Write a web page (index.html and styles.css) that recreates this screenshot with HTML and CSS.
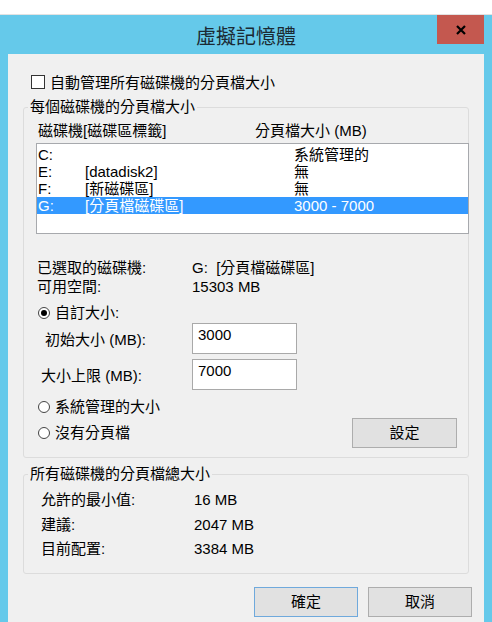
FILE: index.html
```html
<!DOCTYPE html>
<html lang="zh-Hant">
<head>
<meta charset="utf-8">
<title>虛擬記憶體</title>
<link rel="stylesheet" href="styles.css">
</head>
<body>
<div class="topgap"></div>
<div class="window">
  <div class="titlebar">
    <div class="title">虛擬記憶體</div>
    <div class="close">
      <svg width="10" height="10" viewBox="0 0 10 10"><path d="M1 1 L9 9 M9 1 L1 9" stroke="#000" stroke-width="2.2" fill="none"/></svg>
    </div>
  </div>
  <div class="client">
    <div class="check-row"><span class="checkbox"></span><span>自動管理所有磁碟機的分頁檔大小</span></div>

    <fieldset class="group g1">
      <legend>每個磁碟機的分頁檔大小</legend>
      <div class="list-head"><span class="h1">磁碟機[磁碟區標籤]</span><span>分頁檔大小 (MB)</span></div>
      <div class="listbox">
        <div class="row"><span class="c1">C:</span><span class="c2"></span><span class="c3">系統管理的</span></div>
        <div class="row"><span class="c1">E:</span><span class="c2">[datadisk2]</span><span class="c3">無</span></div>
        <div class="row"><span class="c1">F:</span><span class="c2">[新磁碟區]</span><span class="c3">無</span></div>
        <div class="row selected"><span class="c1">G:</span><span class="c2">[分頁檔磁碟區]</span><span class="c3">3000 - 7000</span></div>
      </div>
      <div class="info">
        <div class="kv"><span class="k">已選取的磁碟機:</span><span>G:&nbsp; [分頁檔磁碟區]</span></div>
        <div class="kv"><span class="k">可用空間:</span><span>15303 MB</span></div>
      </div>
      <div class="radio-row first"><span class="radio checked"></span><span>自訂大小:</span></div>
      <div class="field-row r1"><span class="flabel">初始大小 (MB):</span><div class="input">3000</div></div>
      <div class="field-row r2"><span class="flabel">大小上限 (MB):</span><div class="input">7000</div></div>
      <div class="radio-row second"><span class="radio"></span><span>系統管理的大小</span></div>
      <div class="last-row">
        <div class="radio-inline"><span class="radio"></span><span>沒有分頁檔</span></div>
        <div class="btn set">設定</div>
      </div>
    </fieldset>

    <fieldset class="group g2">
      <legend>所有磁碟機的分頁檔總大小</legend>
      <div class="totals">
        <div class="trow"><span class="tk">允許的最小值:</span><span>16 MB</span></div>
        <div class="trow"><span class="tk">建議:</span><span>2047 MB</span></div>
        <div class="trow"><span class="tk">目前配置:</span><span>3384 MB</span></div>
      </div>
    </fieldset>

    <div class="buttons">
      <div class="btn default">確定</div>
      <div class="btn">取消</div>
    </div>
  </div>
</div>
</body>
</html>
```

FILE: styles.css
```css
* { box-sizing: border-box; }
html, body {
  margin: 0;
  padding: 0;
  background: #ffffff;
  overflow: hidden;
}
body {
  font-family: "Liberation Sans", "Noto Sans CJK TC", sans-serif;
  font-size: 15px;
  color: #000;
  width: 492px;
  height: 622px;
}
.topgap {
  height: 15px;
  border-bottom: 1px solid #e2e2e2;
}
.window {
  background: #65c9ea;
  padding: 0 8px;
  height: 607px;
}
.titlebar {
  height: 39px;
  display: grid;
  grid-template-columns: 47px 1fr 47px;
  align-items: start;
}
.title {
  grid-column: 2;
  text-align: center;
  font-size: 20px;
  line-height: 26px;
  padding-top: 8px;
  color: #1b2a33;
  font-family: "Noto Sans CJK TC", sans-serif;
}
.close {
  grid-column: 3;
  height: 29px;
  background: #c4584f;
  display: flex;
  align-items: center;
  justify-content: center;
}
.close svg { display: block; }

.client {
  background: #f0f0f0;
  height: 568px;
  padding: 19px 12px 0 15px;
  display: flex;
  flex-direction: column;
}
.check-row {
  height: 20px;
  display: flex;
  align-items: center;
  gap: 5px;
  padding-left: 8px;
  line-height: 18px;
}
.checkbox {
  width: 14px;
  height: 14px;
  border: 1px solid #333;
  background: #fff;
  margin-top: -2px;
}

.group {
  margin: 0 3px 0 0;
  padding: 0;
  border: 1px solid #dcdcdc;
  border-radius: 3px;
  min-width: 0;
}
.group legend {
  margin-left: 4px;
  padding: 0 2px;
  line-height: 18px;
  font-size: 15px;
}
.g1 { margin-top: 5px; padding-bottom: 9px; }
.g2 { margin-top: 7px; padding-bottom: 11.5px; }

.list-head {
  margin-top: 6px;
  line-height: 18px;
  display: flex;
  padding-left: 14px;
}
.list-head .h1 { width: 217px; }

.listbox {
  margin: 3px -1px 0 12px;
  height: 91px;
  border: 1px solid #a7a9ad;
  background: #fff;
  padding-top: 2px;
}
.row {
  height: 17px;
  line-height: 17px;
  display: flex;
  padding-left: 1px;
}
.row .c1 { width: 47px; }
.row .c2 { width: 209px; }
.row.selected { background: #3399ff; color: #fff; }

.info {
  margin-top: 24px;
  padding-left: 13px;
}
.kv {
  line-height: 19px;
  display: flex;
}
.kv .k { width: 155px; }

.radio-row, .radio-inline {
  display: flex;
  align-items: center;
  gap: 5px;
  height: 20px;
  line-height: 18px;
}
.radio-row { padding-left: 14px; }
.radio-row.first { margin-top: 7px; }
.radio-row.second { margin-top: 7px; }
.radio {
  width: 12px;
  height: 12px;
  border-radius: 50%;
  border: 1px solid #444;
  background: #fff;
  display: flex;
  align-items: center;
  justify-content: center;
}
.radio.checked::after {
  content: "";
  width: 6px;
  height: 6px;
  border-radius: 50%;
  background: #000;
}

.field-row {
  display: flex;
  align-items: center;
  height: 31px;
}
.field-row.r2 { margin-top: 5px; }
.flabel { padding-top: 3px; line-height: 18px; }
.r1 .flabel { margin-left: 21px; width: 147px; }
.r2 .flabel { margin-left: 17px; width: 151px; }
.input {
  width: 105px;
  height: 31px;
  border: 1px solid #a9a9a9;
  background: #fff;
  padding: 2px 5px 0;
  line-height: 18px;
}

.last-row {
  margin-top: 1px;
  height: 30px;
  display: flex;
  align-items: center;
  justify-content: space-between;
  padding-left: 14px;
  padding-right: 11px;
}

.btn {
  width: 104px;
  height: 30px;
  background: #e1e1e1;
  border: 1px solid #adadad;
  display: flex;
  align-items: center;
  justify-content: center;
  line-height: 18px;
}
.btn.default { border-color: #6fa9dc; }
.btn.set { width: 105px; }

.totals { padding: 5px 0 0 17px; }
.trow {
  line-height: 24.5px;
  display: flex;
}
.trow .tk { width: 153px; }

.buttons {
  margin-top: 13px;
  display: flex;
  justify-content: flex-end;
  gap: 10px;
}
```
